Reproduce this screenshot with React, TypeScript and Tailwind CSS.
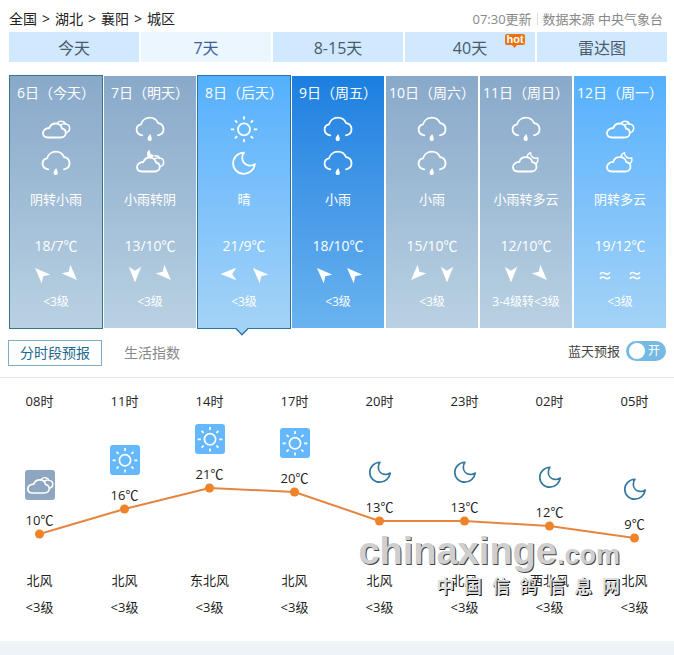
import React, { useState } from 'react';
import clsx from 'clsx';

type Weather = 'overcast' | 'overcastNight' | 'rain' | 'sun' | 'moon' | 'cloudyNight';
type Wind = 'nw' | 'se' | 's' | 'w' | 'sw' | 'calm';

const tabs = ['今天', '7天', '8-15天', '40天', '雷达图'];

const days: {
  date: string;
  icons: Weather[];
  text: string;
  temp: string;
  winds: Wind[];
  level: string;
  tone: 'gray' | 'light' | 'blue';
}[] = [
  { date: '6日（今天）', icons: ['overcast', 'rain'], text: '阴转小雨', temp: '18/7℃', winds: ['nw', 'se'], level: '<3级', tone: 'gray' },
  { date: '7日（明天）', icons: ['rain', 'overcastNight'], text: '小雨转阴', temp: '13/10℃', winds: ['s', 'se'], level: '<3级', tone: 'gray' },
  { date: '8日（后天）', icons: ['sun', 'moon'], text: '晴', temp: '21/9℃', winds: ['w', 'nw'], level: '<3级', tone: 'light' },
  { date: '9日（周五）', icons: ['rain', 'rain'], text: '小雨', temp: '18/10℃', winds: ['nw', 'nw'], level: '<3级', tone: 'blue' },
  { date: '10日（周六）', icons: ['rain', 'rain'], text: '小雨', temp: '15/10℃', winds: ['sw', 's'], level: '<3级', tone: 'gray' },
  { date: '11日（周日）', icons: ['rain', 'cloudyNight'], text: '小雨转多云', temp: '12/10℃', winds: ['s', 'se'], level: '3-4级转<3级', tone: 'gray' },
  { date: '12日（周一）', icons: ['overcast', 'cloudyNight'], text: '阴转多云', temp: '19/12℃', winds: ['calm', 'calm'], level: '<3级', tone: 'light' },
];

const hours: { hour: string; icon: Weather; temp: number; wind: string }[] = [
  { hour: '08时', icon: 'overcast', temp: 10, wind: '北风' },
  { hour: '11时', icon: 'sun', temp: 16, wind: '北风' },
  { hour: '14时', icon: 'sun', temp: 21, wind: '东北风' },
  { hour: '17时', icon: 'sun', temp: 20, wind: '北风' },
  { hour: '20时', icon: 'moon', temp: 13, wind: '北风' },
  { hour: '23时', icon: 'moon', temp: 13, wind: '北风' },
  { hour: '02时', icon: 'moon', temp: 12, wind: '西北风' },
  { hour: '05时', icon: 'moon', temp: 9, wind: '北风' },
];

const tones = {
  gray: 'from-[#89a9ca] to-[#b9d1e2]',
  light: 'from-[#54b0fd] to-[#a4d3f7]',
  blue: 'from-[#1a7fe0] to-[#69b3ef]',
};

const angles = { nw: 135, se: -45, s: 0, w: 90, sw: 45 };

// height of a temperature inside the chart area
const pointY = (temp: number) => Math.round(123 - (temp - 10) * 4.17);
const pointX = (index: number) => `${((index + 0.5) / hours.length) * 100}%`;

const WeatherIcon = ({ type, className }: { type: Weather; className?: string }) => (
  <svg
    viewBox="0 0 32 32"
    fill="none"
    stroke="currentColor"
    strokeWidth="1.8"
    strokeLinecap="round"
    strokeLinejoin="round"
    className={className}
    aria-hidden="true"
  >
    {type === 'rain' && (
      <>
        <path d="M8.3 22.3C5 21.9 2.6 19.7 2.6 16.6C2.6 14 4.3 12 7 11.4C8 7.5 11.5 4.7 15.8 4.7C19.6 4.7 22.7 6.8 24.1 10.2C27.3 10.7 29.5 13.3 29.5 16.6C29.5 19.4 27.3 21.8 24 22.3" />
        <path d="M16.1 21C14.8 23 13.6 24.4 13.6 25.8C13.6 27.2 14.6 28.1 15.7 28.1C16.9 28.1 17.8 27.2 17.8 25.9C17.8 24.5 17 22.9 16.1 21Z" fill="currentColor" stroke="none" />
      </>
    )}
    {(type === 'overcast' || type === 'overcastNight') && (
      <>
        <path d="M8 24.5H20.8C23.8 24.5 25.8 22.5 25.8 20C25.8 17.6 24.2 15.9 22 15.5C21.5 12.6 18.9 10.5 15.8 10.5C12.7 10.5 10.2 12.3 9.4 15C5.8 15 3 17.2 3 20C3 22.8 5 24.5 8 24.5Z" />
        <path
          d={
            type === 'overcast'
              ? 'M17.4 9.9C18.6 8.5 20.1 8 21.7 8.2C23.7 8.4 24.9 9.4 25.4 11.1C28 11.3 29.7 13.1 29.7 15.3C29.7 17.4 28.4 19 26.4 19.6'
              : 'M20.8 8.9C23.3 8.6 24.9 9.4 25.4 11.1C28 11.3 29.7 13.1 29.7 15.3C29.7 17.4 28.4 19 26.4 19.6'
          }
          strokeWidth="1.5"
        />
        <path d="M20.6 12C22 11 23.8 10.7 25.4 11.1" strokeWidth="1.3" />
      </>
    )}
    {type === 'overcastNight' && (
      <path d="M15.8 2.4C13.3 3.6 12.4 6.2 13.4 9.6L16 10.4L18.8 9.9C19.3 9.3 19.6 8.6 19.7 7.8C17.2 8.2 15.2 5.5 15.8 2.4Z" fill="currentColor" stroke="none" />
    )}
    {type === 'cloudyNight' && (
      <>
        <path d="M8 24.5H21.2C24.4 24.5 26.5 22.4 26.5 19.7C26.5 17.2 24.8 15.4 22.2 15.1C21.6 12.2 19 10.2 15.8 10.2C12.7 10.2 10.1 12.1 9.3 14.9C5.8 15 3 17.2 3 20C3 22.8 5 24.5 8 24.5Z" />
        <path d="M17.2 10C17.3 8 18.6 6.2 20.6 5.6C20.1 9 23.6 12.6 27.8 10.8C28.3 13.4 27.3 15.7 25.6 16.8" strokeWidth="1.4" />
      </>
    )}
    {type === 'moon' && (
      <path d="M15.9 5.6C9.7 5.8 5.1 10.5 5.1 16.3C5.1 22.2 9.8 26.8 15.7 26.8C21.4 26.8 26 23 26.9 17.1C25.3 18.3 23.2 18.9 21.2 18.6C17.2 18.1 14.2 15 14.2 11.1C14.2 9 14.8 7.1 15.9 5.6Z" />
    )}
    {type === 'sun' && (
      <>
        <circle cx="16" cy="16.3" r="6" />
        <path d="M16 3.3V6.5M16 26.1V29.3M2.8 16.3H6.2M25.8 16.3H29.2M7 7.3L9.2 9.5M22.8 23.1L25 25.3M25 7.3L22.8 9.5M9.2 23.1L7 25.3" strokeLinecap="butt" />
      </>
    )}
  </svg>
);

const WindIcon = ({ wind }: { wind: Wind }) => (
  <svg viewBox="0 0 18 18" className="w-[18px] h-[18px]" aria-hidden="true">
    {wind === 'calm' ? (
      <path
        d="M4 9.2C5.6 6.8 7.4 7.2 9 8.3C10.6 9.4 12.4 9.6 14 7.4M4 13.8C5.6 11.4 7.4 11.8 9 12.9C10.6 14 12.4 14.2 14 12"
        fill="none"
        stroke="white"
        strokeWidth="1.6"
      />
    ) : (
      <path d="M2.8 1.8L9 5.8L15.2 1.8L9 17.4Z" fill="white" transform={`rotate(${angles[wind]} 9 9)`} />
    )}
  </svg>
);

const Header = () => (
  <header className="flex justify-between items-center h-5">
    <nav className="flex gap-[5px] text-sm leading-5 text-[#222]">
      <a href="#china">全国</a>
      <span>&gt;</span>
      <a href="#hubei">湖北</a>
      <span>&gt;</span>
      <a href="#xiangyang">襄阳</a>
      <span>&gt;</span>
      <a href="#city">城区</a>
    </nav>
    <div className="flex items-center pr-1 text-[13px] leading-5 text-[#888]">
      <span className="pr-[5px]">07:30更新</span>
      <span className="h-3 border-l border-[#ddd]" />
      <span className="pl-[5px]">数据来源 中央气象台</span>
    </div>
  </header>
);

const DayCard = ({ day, index }: { day: (typeof days)[number]; index: number }) => {
  const selected = index === 2;

  return (
    <li
      className={clsx(
        'relative flex flex-col items-center bg-linear-to-b pt-[7px] pb-4 text-white whitespace-nowrap',
        tones[day.tone],
        index === 0 && 'outline outline-[#3c718a]',
        selected && 'outline outline-[#2a759f]'
      )}
    >
      <h2 className="text-sm leading-5">{day.date}</h2>
      <div className="flex flex-col gap-[2px] mt-[10px]">
        {day.icons.map((icon, i) => (
          <WeatherIcon key={i} type={icon} className="w-8 h-8" />
        ))}
      </div>
      <p className="mt-[10px] text-[13px] leading-5">{day.text}</p>
      <p className="mt-[27px] text-sm leading-5">{day.temp}</p>
      <div className="flex gap-3 mt-[9px]">
        {day.winds.map((wind, i) => (
          <WindIcon key={i} wind={wind} />
        ))}
      </div>
      <p className="mt-[9px] text-xs leading-5">{day.level}</p>
      {selected && (
        <svg viewBox="0 0 14 8" className="absolute top-full left-[37px] w-[14px] h-2" aria-hidden="true">
          <path d="M0.5 0L7 6.8L13.5 0" fill="#a4d3f7" stroke="#2a759f" strokeWidth="1.3" />
        </svg>
      )}
    </li>
  );
};

const Watermark = () => (
  <div className="absolute top-[153px] right-[54px] pointer-events-none">
    <p className="font-['Liberation_Sans',sans-serif] font-bold text-[38px] leading-10 text-[#cfcfcf] [text-shadow:1px_1px_0_#444]">
      chinaxinge<span className="text-[27px]">.com</span>
    </p>
    <p className="flex justify-between mt-px ml-[78px] text-[18px] leading-5 font-bold text-[#ddd] [text-shadow:1px_1px_0_#000]">
      {'中国信鸽信息网'.split('').map((char, i) => (
        <span key={i}>{char}</span>
      ))}
    </p>
  </div>
);

const HourlyForecast = () => (
  <section className="relative pt-[13px] pb-6 border-t border-[#e6e6e6] text-[#222] overflow-hidden">
    <div className="relative -mx-[3px]">
      <ul className="grid grid-cols-8 text-center">
        {hours.map((item) => (
          <li key={item.hour} className="flex flex-col items-center">
            <p className="text-[13px] leading-5">{item.hour}</p>
            <div className="h-[159px]">
              <div
                className="flex flex-col items-center gap-[10px]"
                style={{ paddingTop: pointY(item.temp) - 64 }}
              >
                <span
                  className={clsx(
                    'flex items-center justify-center w-[30px] h-[30px] rounded-[3px]',
                    item.icon === 'sun' && 'bg-[#65b8fb] text-white',
                    item.icon === 'overcast' && 'bg-[#8fa6c1] text-white',
                    item.icon === 'moon' && 'text-[#33789f]'
                  )}
                >
                  <WeatherIcon type={item.icon} className="w-[30px] h-[30px]" />
                </span>
                <span className="text-[13px] leading-5">{item.temp}℃</span>
              </div>
            </div>
            <p className="text-[13px] leading-5">{item.wind}</p>
            <p className="mt-[7px] text-[13px] leading-5">&lt;3级</p>
          </li>
        ))}
      </ul>
      <svg className="absolute top-5 left-0 w-full h-[159px]" aria-hidden="true">
        {hours.slice(1).map((item, i) => (
          <line
            key={i}
            x1={pointX(i)}
            y1={pointY(hours[i].temp)}
            x2={pointX(i + 1)}
            y2={pointY(item.temp)}
            stroke="#e58640"
            strokeWidth="2"
          />
        ))}
        {hours.map((item, i) => (
          <circle key={i} cx={pointX(i)} cy={pointY(item.temp)} r="4.5" fill="#f08228" />
        ))}
      </svg>
    </div>
    <Watermark />
  </section>
);

const App = () => {
  const [blueSky, setBlueSky] = useState(true);

  return (
    <div className="min-h-screen flex flex-col bg-[#eef3f7] font-['Open_Sans','Noto_Sans_CJK_SC',sans-serif]">
      <main className="bg-white pt-[9px]">
        <div className="pl-[9px] pr-[7px]">
          <Header />
          {/* Forecast range */}
          <nav className="grid grid-cols-5 gap-[2px] mt-[3px]">
            {tabs.map((tab, i) => (
              <a
                key={tab}
                href="#forecast"
                className={clsx(
                  'relative h-[30px] text-center text-base leading-8',
                  i === 1 ? 'bg-[#ebf6ff] text-[#40609c]' : 'bg-[#d0e9fe] text-[#4b5b6b]'
                )}
              >
                {tab}
                {tab === '40天' && (
                  <span className="absolute top-[2px] right-[10px] w-5 h-[11px] rounded-[2px] bg-[#e9720f] font-['Liberation_Sans',sans-serif] text-[11px] leading-[11px] font-bold text-white">
                    hot
                    <svg viewBox="0 0 5 3" className="absolute top-full left-[7px] w-[5px] h-[3px]" aria-hidden="true">
                      <path d="M0 0H5L2.5 3Z" fill="#e9720f" />
                    </svg>
                  </span>
                )}
              </a>
            ))}
          </nav>
        </div>

        {/* Seven days */}
        <ul className="grid grid-cols-7 gap-[2px] mt-[14px] pl-[10px] pr-2">
          {days.map((day, i) => (
            <DayCard key={day.date} day={day} index={i} />
          ))}
        </ul>

        <div className="flex justify-between items-start mt-3 mb-[11px] px-2">
          <div className="flex items-center text-sm">
            <button className="w-[94px] h-[26px] border border-[#7fadc6] text-[#22668e] leading-6">
              分时段预报
            </button>
            <button className="ml-[22px] leading-6 text-[#888]">生活指数</button>
          </div>
          <label className="flex items-center gap-[6px] mt-px text-[13px] leading-5 text-[#444] cursor-pointer">
            蓝天预报
            <input
              type="checkbox"
              className="sr-only"
              checked={blueSky}
              onChange={() => setBlueSky(!blueSky)}
            />
            <span
              className={clsx(
                'flex items-center justify-between w-10 h-5 pl-[3px] pr-[6px] rounded-full text-xs text-white',
                blueSky ? 'bg-[#75bae3]' : 'bg-[#bbb] flex-row-reverse'
              )}
            >
              <span className="w-4 h-4 rounded-full bg-white" />
              {blueSky ? '开' : '关'}
            </span>
          </label>
        </div>

        <HourlyForecast />
      </main>
    </div>
  );
};

export default App;
